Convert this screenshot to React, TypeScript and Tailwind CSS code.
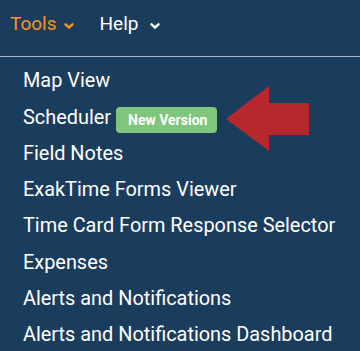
import React from 'react';

const items = [
  'Map View',
  'Scheduler',
  'Field Notes',
  'ExakTime Forms Viewer',
  'Time Card Form Response Selector',
  'Expenses',
  'Alerts and Notifications',
  'Alerts and Notifications Dashboard',
];

const Chevron: React.FC<{ className?: string }> = ({ className }) => (
  <svg viewBox="0 0 10 6" className={className} fill="none" stroke="currentColor" strokeWidth="2.4" strokeLinecap="round" strokeLinejoin="round">
    <path d="M1.5 1.3 L5 4.5 L8.5 1.3" />
  </svg>
);

const Arrow: React.FC = () => (
  <svg width="84" height="66" viewBox="0 0 84 66" className="absolute left-[203px] top-[-13px]">
    <polygon points="0,33 43,0 43,17 83,17 83,49 43,49 43,65" fill="#b7282c" />
  </svg>
);

const App: React.FC = () => {
  return (
    <div className="w-[360px] h-[351px] overflow-hidden bg-[#1b3d5d] text-white font-['Roboto',sans-serif]">
      <div className="h-[56px] flex items-center border-b border-[#a9b6c4] box-content">
        <div className="flex items-center pl-[10px] text-[19px] leading-[24px] text-[#f7941d] -mt-[9px]">
          <span>Tools</span>
          <Chevron className="w-[10px] h-[6px] ml-[7px] mt-[4px]" />
        </div>
        <div className="flex items-center ml-[26px] text-[19px] leading-[24px] -mt-[9px]">
          <span>Help</span>
          <Chevron className="w-[10px] h-[6px] ml-[12px] mt-[4px] text-white" />
        </div>
      </div>
      <ul className="pl-[23px] pt-[6px]">
        {items.map((item) => (
          <li key={item} className="relative h-[36.3px] flex items-center text-[19.9px]">
            <span>{item}</span>
            {item === 'Scheduler' && (
              <>
                <span className="absolute left-[93px] top-[8px] h-[26px] pl-[12px] pr-[10px] flex items-center rounded-[4px] bg-[#7fc57b] text-[14px] font-bold">
                  New Version
                </span>
                <Arrow />
              </>
            )}
          </li>
        ))}
      </ul>
    </div>
  );
};

export default App;
